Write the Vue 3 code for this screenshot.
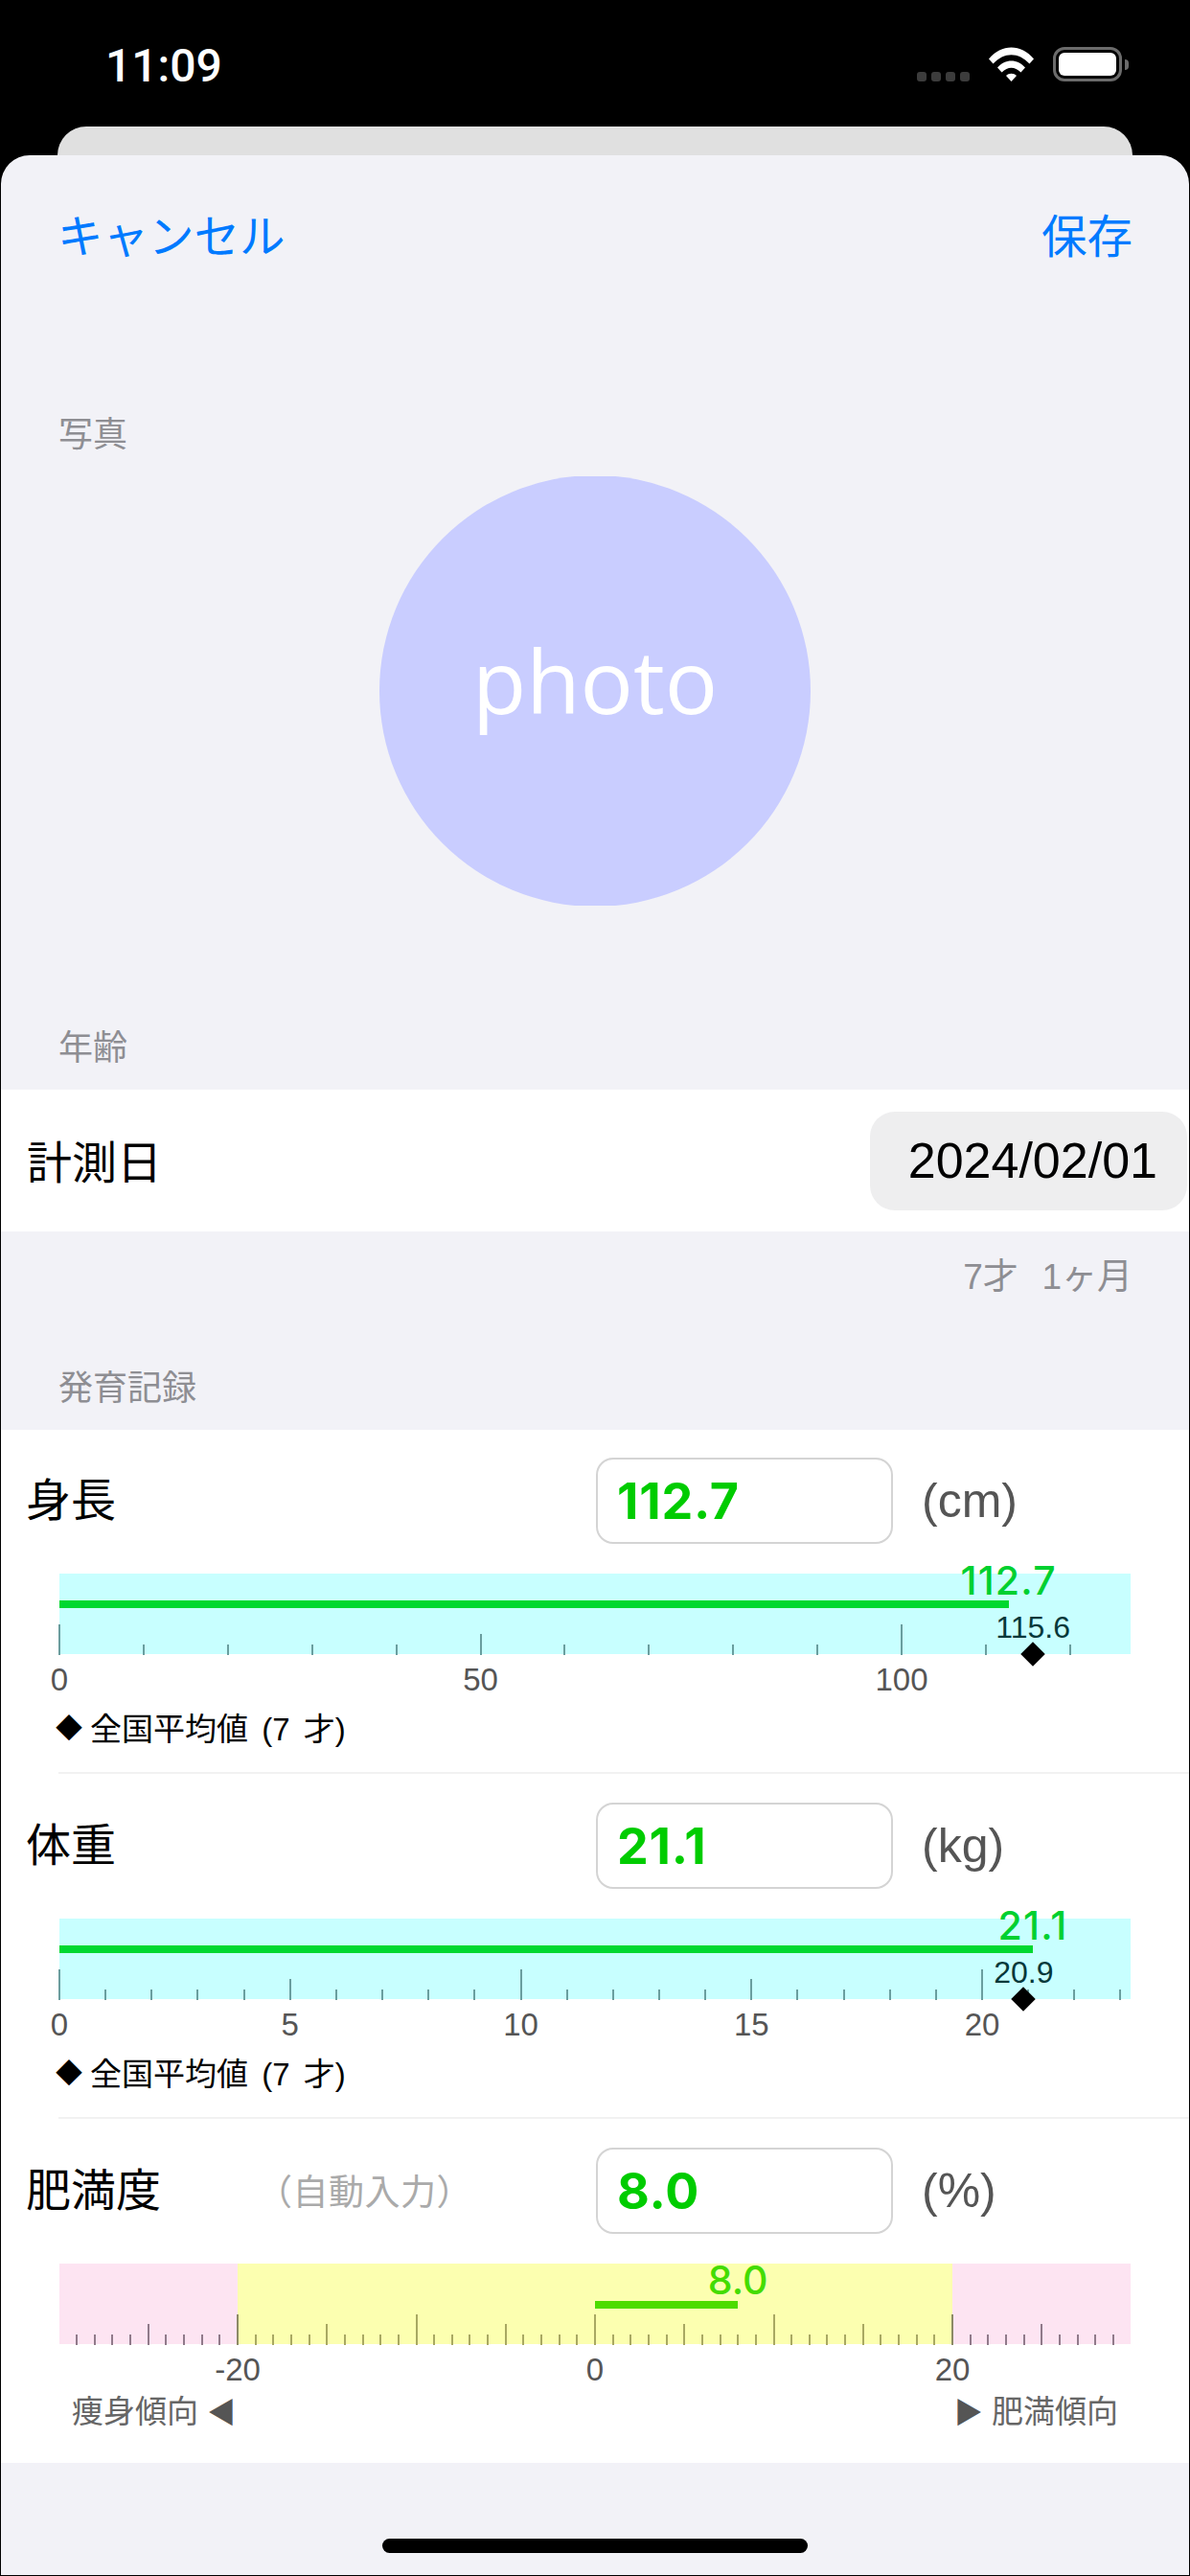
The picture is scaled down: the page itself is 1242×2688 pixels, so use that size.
<script setup>
const heightChart = {
  bg: [{ left: 0, width: 1118, color: '#c8ffff' }],
  zero: 0, scale: 8.79, from: 0, to: 127, step: 10, mid: 50, major: 100, tick: '#6a9e9f',
  labels: [0, 50, 100], value: 112.7, text: '112.7', color: '#00d830', textColor: '#00d030',
  avg: 115.6, avgText: '115.6',
}
const weightChart = {
  bg: [{ left: 0, width: 1118, color: '#c8ffff' }],
  zero: 0, scale: 48.15, from: 0, to: 23, step: 1, mid: 5, major: 10, tick: '#6a9e9f',
  labels: [0, 5, 10, 15, 20], value: 21.1, text: '21.1', color: '#00d830', textColor: '#00d030',
  avg: 20.9, avgText: '20.9',
}
const fatChart = {
  bg: [
    { left: 0, width: 186, color: '#fde4f2' },
    { left: 186, width: 746, color: '#fcffb0' },
    { left: 932, width: 186, color: '#fde4f2' },
  ],
  zero: 559, scale: 18.65, from: -29, to: 29, step: 1, mid: 5, major: 10, tick: '#a8a862',
  labels: [-20, 0, 20], value: 8, text: '8.0', color: '#4cdc00', textColor: '#44dc00',
}

const rows = [
  { name: '身長', value: '112.7', unit: '(cm)', chart: heightChart, legend: true },
  { name: '体重', value: '21.1', unit: '(kg)', chart: weightChart, legend: true },
  { name: '肥満度', note: '（自動入力）', value: '8.0', unit: '(%)', chart: fatChart },
]

function ticks(c) {
  const out = []
  for (let v = c.from; v <= c.to; v += c.step) {
    const kind = v % c.major === 0 ? 'major' : v % c.mid === 0 ? 'mid' : 'minor'
    const onPink = c === fatChart && Math.abs(v) > 20
    const onEdge = c === fatChart && Math.abs(v) === 20
    out.push({
      v, kind,
      style: {
        left: c.zero + v * c.scale - 1 + 'px',
        background: onPink ? '#907a8a' : onEdge ? '#8c8a66' : c.tick,
      },
    })
  }
  return out
}
const x = (c, v) => c.zero + v * c.scale + 'px'
const barStyle = (c) => ({
  left: c.zero + 'px',
  width: c.value * c.scale + 'px',
  background: c.color,
  top: c === fatChart ? '39px' : '28px',
})
</script>

<template>
  <div class="phone">
    <header class="status">
      <span class="time">11:09</span>
      <div class="status-icons">
        <div class="signal"><i></i><i></i><i></i><i></i></div>
        <svg class="wifi" viewBox="0 0 47 36" width="47" height="36">
          <path fill="#fff" d="M0 12.5 C13 -3.5 34 -3.5 47 12.5 L42.5 17.5 C31 5 16 5 4.5 17.5 Z" />
          <path fill="#fff" d="M9 21.5 C17 12 30 12 38 21.5 L33.5 26.5 C27 20 20 20 13.5 26.5 Z" />
          <path fill="#fff" d="M18 30 C21 27 26 27 29 30 L23.5 36 Z" />
        </svg>
        <div class="battery"><div class="battery-fill"></div><div class="battery-nub"></div></div>
      </div>
    </header>

    <div class="back-card"></div>

    <main class="sheet">
      <nav class="nav">
        <span>キャンセル</span>
        <span>保存</span>
      </nav>

      <p class="section-label photo-label">写真</p>
      <div class="photo-wrap">
        <div class="photo-clip">
          <div class="photo">photo</div>
        </div>
      </div>

      <p class="section-label age-label">年齢</p>
      <section class="date-row">
        <span class="row-name">計測日</span>
        <span class="date-pill">2024/02/01</span>
      </section>
      <p class="age-value">7才 &nbsp;1ヶ月</p>

      <p class="section-label record-label">発育記録</p>
      <section class="records">
        <article v-for="row in rows" :key="row.name" class="record">
          <div class="record-head">
            <span class="record-name">{{ row.name }}</span>
            <span v-if="row.note" class="note">{{ row.note }}</span>
            <div class="input">{{ row.value }}</div>
            <span class="unit">{{ row.unit }}</span>
          </div>

          <div class="chart">
            <div
              v-for="(b, i) in row.chart.bg"
              :key="i"
              class="zone"
              :style="{ left: b.left + 'px', width: b.width + 'px', background: b.color }"
            ></div>
            <div
              v-for="t in ticks(row.chart)"
              :key="t.v"
              class="tick"
              :class="t.kind"
              :style="t.style"
            ></div>
            <div class="bar" :style="barStyle(row.chart)"></div>
            <span
              class="bar-label"
              :class="{ low: row.chart === fatChart }"
              :style="{ left: x(row.chart, row.chart.value), color: row.chart.textColor }"
            >{{ row.chart.text }}</span>
            <template v-if="row.chart.avg">
              <span class="avg-label" :style="{ left: x(row.chart, row.chart.avg) }">{{ row.chart.avgText }}</span>
              <span class="avg-mark" :style="{ left: x(row.chart, row.chart.avg) }"></span>
            </template>
            <span
              v-for="l in row.chart.labels"
              :key="l"
              class="axis-label"
              :style="{ left: x(row.chart, l) }"
            >{{ l }}</span>
          </div>

          <div v-if="row.legend" class="legend"><span class="legend-mark">◆</span>全国平均値 (7 才)</div>
          <div v-else class="trend">
            <span>痩身傾向 <span class="arrow">◀</span></span>
            <span><span class="arrow">▶</span> 肥満傾向</span>
          </div>
        </article>
      </section>

      <div class="home-wrap"><div class="home"></div></div>
    </main>
  </div>
</template>

<style>
html, body { margin: 0; background: #000; }
</style>

<style scoped>
.phone {
  width: 1242px;
  height: 2688px;
  background: #000;
  overflow: hidden;
  font-family: "Liberation Sans", "Noto Sans CJK JP", sans-serif;
  display: flex;
  flex-direction: column;
}
.status {
  height: 132px;
  flex: none;
  position: relative;
  display: flex;
  justify-content: space-between;
  box-sizing: border-box;
  padding: 0 71px 0 110px;
}
.time {
  font-family: Roboto, "Liberation Sans", sans-serif;
  font-weight: 500;
  font-size: 48px;
  line-height: 48px;
  color: #fff;
  margin-top: 45px;
}
.status-icons { display: flex; align-items: flex-start; padding-top: 49px; }
.signal { display: flex; gap: 5px; margin: 26px 20px 0 0; }
.signal i { width: 10px; height: 10px; border-radius: 3px; background: #3c3c3c; display: block; }
.wifi { margin-right: 20px; display: block; }
.battery {
  position: relative;
  width: 72px; height: 36px;
  box-sizing: border-box;
  border: 3px solid #6b6b6b;
  border-radius: 12px;
  padding: 3px;
}
.battery-fill { width: 100%; height: 100%; background: #fff; border-radius: 6px; }
.battery-nub {
  position: absolute; right: -10px; top: 10px;
  width: 4px; height: 11px;
  background: #6b6b6b;
  border-radius: 0 4px 4px 0;
}
.back-card {
  flex: none;
  height: 30px;
  margin: 0 60px;
  background: #e0e0e0;
  border-radius: 30px 30px 0 0;
}
.sheet {
  flex: 1;
  margin: 0 1px 1px;
  background: #f2f2f7;
  border-radius: 30px 30px 0 0;
  display: flex;
  flex-direction: column;
  min-height: 0;
}
.nav {
  display: flex;
  justify-content: space-between;
  padding: 51px 59px 0;
  color: #007aff;
  font-size: 47.5px;
  line-height: 70px;
}
.section-label {
  margin: 0;
  padding-left: 60px;
  font-size: 36px;
  height: 52px;
  line-height: 55px;
  color: #8e8e93;
}
.photo-label { margin-top: 143px; }
.photo-wrap { display: flex; justify-content: center; margin-top: 19px; }
.photo-clip { width: 450px; height: 448px; overflow: hidden; }
.photo {
  width: 450px; height: 450px;
  box-sizing: border-box;
  padding-bottom: 24px;
  margin-top: -1px;
  border-radius: 50%;
  background: #c9cdff;
  color: #fff;
  font-family: "Open Sans", sans-serif;
  font-weight: 400;
  font-size: 92px;
  display: flex;
  align-items: center;
  justify-content: center;
}
.age-label { margin-top: 121px; }
.date-row {
  margin-top: 19px;
  height: 148px;
  background: #fff;
  display: flex;
  align-items: center;
  justify-content: space-between;
  padding-left: 27px;
  padding-right: 2px;
}
.row-name { font-size: 47px; margin-top: -3px; }
.date-pill {
  width: 331px; height: 103px;
  box-sizing: border-box;
  background: #eeeeef;
  border-radius: 26px;
  font-size: 52px;
  display: flex;
  align-items: center;
  justify-content: flex-end;
  padding-right: 31px;
}
.age-value {
  margin: 22px 0 0;
  padding-right: 59px;
  text-align: right;
  font-size: 37px;
  line-height: 52px;
  word-spacing: 2px;
  color: #8e8e93;
}
.record-label { margin-top: 62px; }
.records { margin-top: 19px; background: #fff; }
.record {
  height: 360px;
  box-sizing: border-box;
  position: relative;
  padding-top: 30px;
}
.record:first-child { height: 359px; padding-top: 29px; }
.record:last-child { height: 359px; }
.record:not(:last-child)::after {
  content: "";
  position: absolute;
  left: 60px; right: 0; bottom: 0;
  height: 2px;
  background: #f2f2f2;
}
.record-head {
  position: relative;
  display: flex;
  align-items: center;
  height: 90px;
  padding-left: 26px;
}
.record-name { font-size: 47px; line-height: 66px; width: 595px; flex: none; }
.note {
  position: absolute;
  left: 267px;
  font-size: 37px;
  letter-spacing: 0.5px;
  margin-top: -2px;
  color: #aaa;
}
.input {
  width: 310px;
  height: 90px;
  box-sizing: border-box;
  border: 2px solid #d4d4d4;
  border-radius: 18px;
  padding-left: 20px;
  display: flex;
  align-items: center;
  color: #00cc00;
  font-family: Inter, "Liberation Sans", sans-serif;
  font-weight: 700;
  font-size: 52px;
  letter-spacing: 0.8px;
  flex: none;
}
.unit { margin-left: 30px; color: #555; font-size: 50px; }
.chart {
  position: relative;
  height: 84px;
  width: 1118px;
  margin: 31px 0 0 61px;
}
.zone { position: absolute; top: 0; bottom: 0; }
.tick { position: absolute; bottom: -1px; width: 2px; }
.tick.major { height: 32px; }
.tick.mid { height: 22px; }
.tick.minor { height: 11px; }
.bar { position: absolute; height: 8px; }
.bar-label {
  position: absolute;
  top: -16px;
  transform: translateX(-50%);
  font-family: Inter, "Liberation Sans", sans-serif;
  font-weight: 500;
  font-size: 41px;
  letter-spacing: 1.2px;
  line-height: 46px;
  white-space: nowrap;
}
.bar-label.low { top: -6px; letter-spacing: 0; }
.avg-label {
  position: absolute;
  top: 38px;
  transform: translateX(-50%);
  font-size: 32px;
  line-height: 36px;
  color: #06383a;
}
.avg-mark {
  position: absolute;
  width: 18px; height: 18px;
  margin-left: -9px;
  background: #000;
  transform: rotate(45deg);
  bottom: -9px;
}
.axis-label {
  position: absolute;
  top: 93px;
  transform: translateX(-50%);
  font-size: 33px;
  line-height: 36px;
  color: #555;
}
.legend {
  margin: 56px 0 0 61px;
  font-size: 33px;
  line-height: 46px;
  color: #000;
  display: flex;
  align-items: center;
  word-spacing: 5px;
  white-space: pre;
}
.legend-mark { width: 36px; font-size: 28px; margin-left: -4px; }
.trend {
  display: flex;
  justify-content: space-between;
  padding: 0 74px;
  margin-top: 48px;
  font-size: 33px;
  line-height: 46px;
  color: #666;
}
.arrow { font-size: 30px; color: #555; }
.home-wrap { flex: 1; display: flex; justify-content: center; align-items: flex-end; padding-bottom: 23px; }
.home { width: 444px; height: 15px; border-radius: 8px; background: #000; }
</style>
